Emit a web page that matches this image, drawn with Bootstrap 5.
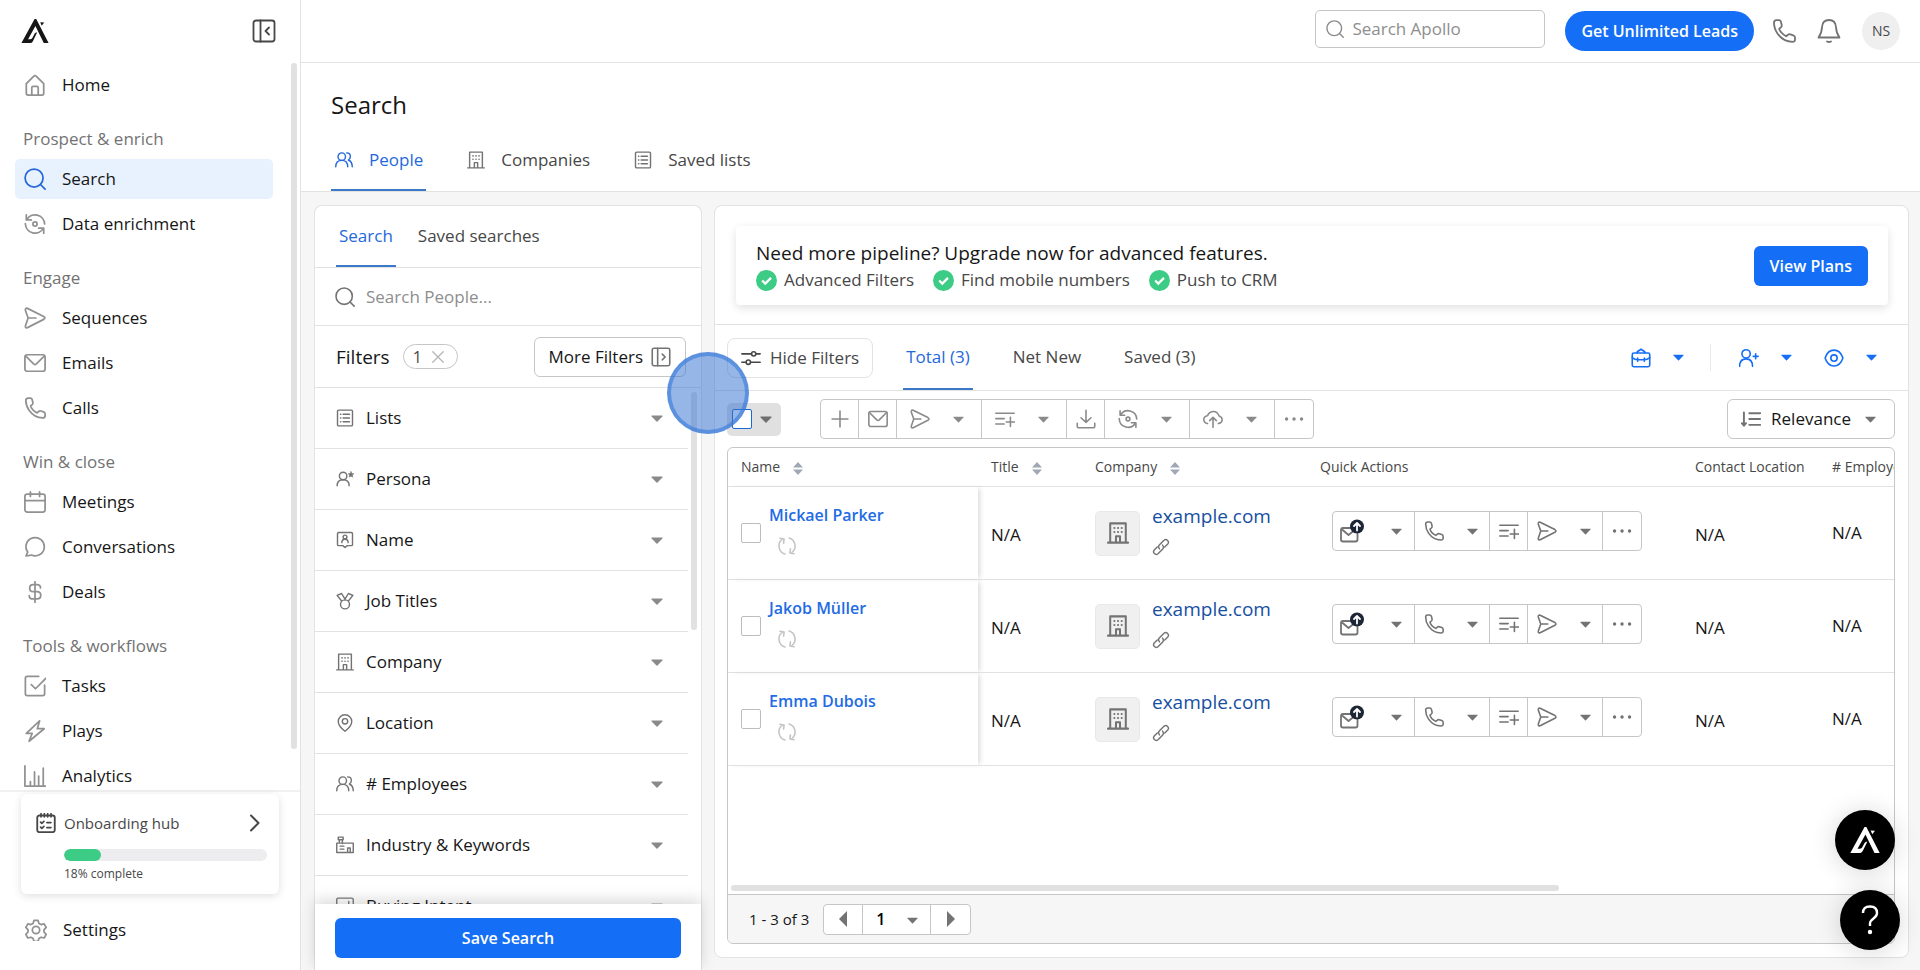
<!DOCTYPE html>
<html lang="en">
<head>
<meta charset="utf-8">
<meta name="viewport" content="width=device-width, initial-scale=1">
<title>Search - Apollo</title>
<link href="https://cdn.jsdelivr.net/npm/bootstrap@5.3.0/dist/css/bootstrap.min.css" rel="stylesheet">
<style>
:root{--blue:#146ef6;--accent:#2468dc;--line:#e2e2e3;--line2:#c6c6c7;--ink:#161616;--ink2:#474747;--mute:#737373;--ico:#919191;--shade:#f6f6f6}
body{font-family:"Open Sans","Noto Sans",sans-serif;font-size:17px;line-height:24px;color:var(--ink);height:100vh;overflow:hidden;background:var(--shade)}
a{text-decoration:none;color:inherit}
.ic{width:20px;height:20px;flex:none;fill:none;stroke:currentColor;stroke-width:1.9;stroke-linecap:round;stroke-linejoin:round}
.ic-lg{width:24px;height:24px;stroke-width:1.8}
.ic-sm{width:18px;height:18px}
.caret{width:12px;height:7px;flex:none;fill:currentColor}
.muted{color:var(--mute)}
.edge{border-color:var(--line)!important}

.side{width:301px;flex:none;background:#fff;border-right:1px solid var(--line)}
.side-head{height:62px;padding:0 24px 0 21px}
.side-nav{padding:4px 27px 0 15px;overflow:hidden;min-height:0}
.side-nav .nav{gap:5px}
.side-link{display:flex;align-items:center;height:40px;padding:0 10px 0 9px;gap:16px;border-radius:5px;font-weight:500}
.side-link .ic{width:22px;height:22px;color:var(--ico)}
.side-link.active{background:#e8f1fe}
.side-link.active .ic{color:var(--accent)}
.side-title{margin:0;padding:22px 8px 8px;font-size:17px;line-height:24px;font-weight:500;color:var(--mute)}
.thumb{position:absolute;background:#e1e1e2;border-radius:3px;width:6px}
.thumb-nav{right:3px;top:2px;height:686px}
.thumb-list{right:4px;top:4px;height:238px}
.side-foot{border-top:2px solid #f1f1f1;background:#fff;padding:2px 21px 20px}
.hub{border-radius:6px;box-shadow:0 2px 8px rgba(0,0,0,.13);padding:17px 12px 11px 15px;color:var(--ink2)}
.hub-label{font-size:15px;font-weight:500}
.hub .progress{height:12px;border-radius:6px;background:#ededef;margin:14px 0 4px 28px}
.hub .progress-bar{background:#3dcc85;border-radius:6px}
.hub-note{font-size:12px;line-height:18px;margin-left:28px;font-weight:500}

.topbar{height:63px;flex:none;border-bottom:1px solid var(--line);background:#fff;padding:0 20px 0 24px}
.top-search{width:230px;height:38px;border:1px solid var(--line2);border-radius:5px;padding:0 10px;gap:8px;color:#8b8b8b;margin:0 20px 4px 0}
.top-icons{gap:21px;margin-left:18px}
.plain-input{border:0;outline:0;background:transparent;padding:0;min-width:0;width:100%;font-weight:500;color:var(--ink)}
.plain-input::placeholder{color:#8e8e8e;opacity:1}
.btn-fill{background:var(--blue);color:#fff;font-size:16px;font-weight:600;border:0;height:40px;padding:0 15px;line-height:24px}
.btn-fill:hover{background:#0f5fd8;color:#fff}
.btn-line{display:flex;align-items:center;height:40px;border:1px solid var(--line2);border-radius:6px;background:#fff;font-weight:500;line-height:24px;color:var(--ink)}
.btn-more{padding:0 14px;gap:8px}
.btn-hide{padding:0 13px;gap:9px;color:var(--ink2);border-radius:8px}
.btn-sort{padding:0 18px 0 13px;gap:10px}
.icon-btn{border:0;background:transparent;padding:0;display:flex;align-items:center;color:inherit}
.avatar{width:38px;height:38px;border-radius:50%;background:#efeff0;font-size:14px;color:var(--ink2)}
.page-head{flex:none;background:#fff;border-bottom:1px solid var(--line);padding:25px 30px 0}
.page-head h1{font-size:24px;line-height:34px;font-weight:500;margin:0 0 16px}
.page-tabs{gap:37px}
.tab-link{display:flex;align-items:center;font-weight:500;color:var(--ink2);border-bottom:2px solid transparent}
.tab-link.active{color:var(--accent);border-bottom-color:#3b78c8}
.page-tabs .tab-link{height:53px;padding:0 3px 8px 4px;gap:16px}
.work{padding:13px 11px 0 13px;gap:12px;min-height:0}
.panel{background:#fff;border:1px solid var(--line);border-radius:8px}

.filters{width:388px;flex:none;border-bottom:0;border-radius:8px 8px 0 0}
.f-tabs{height:62px;flex:none;padding:0 21px;gap:19px}
.f-tabs .tab-link{padding:0 3px}
.f-search{height:58px;flex:none;padding:0 20px;gap:11px}
.f-head{height:62px;flex:none;padding:0 15px 0 21px}
.f-name{font-size:19px;font-weight:500}
.f-count{height:25px;border:1px solid var(--line2);border-radius:13px;padding:0 12px 0 9px;gap:9px;font-size:16px;margin-left:13px;color:var(--ink2)}
.f-count .ic{width:14px;height:14px;color:#b5b5b5;stroke-width:2.200}
.f-row{height:61px;border:0;border-bottom:1px solid var(--line);background:transparent;padding:0 25px 0 21px;gap:12px;font-weight:500;text-align:left;color:var(--ink);width:100%}
.f-row .ic{color:var(--mute)}
.f-row .caret{color:#8a8a8a}
.f-list{overflow:hidden;min-height:0}
.f-rows{padding-right:13px}
.f-save{flex:none;padding:14px 20px 12px;background:#fff;box-shadow:0 -4px 14px rgba(0,0,0,.15)}

.results{margin-bottom:12px;min-width:0}
.banner{flex:none;margin:20px 20px 19px 21px;border-radius:4px;box-shadow:0 3px 10px rgba(0,0,0,.12);padding:14px 20px 13px}
.banner h2{font-size:19px;line-height:26px;font-weight:500;margin:0 0 2px}
.perks{gap:19px;color:var(--ink2);font-weight:400}
.perks li{display:flex;align-items:center;gap:7px}
.tick{width:21px;height:21px;flex:none}
.r-tabs{height:67px;flex:none;padding:0 31px 0 12px;border-top:1px solid var(--line);border-bottom:1px solid var(--line)}
.r-tabs nav{gap:37px;margin-left:30px}
.r-tabs .tab-link{height:65px;padding:0 3px}
.r-acts{color:var(--blue)}
.r-acts .icon-btn{gap:22px}
.r-acts .vr{margin:19px 28px 19px 26px;color:#aaa}
.r-acts .eye-btn{margin-left:32px}
.tools{flex:none;padding:8px 13px 8px 12px}
.check-all{background:#e0e0e1;border-radius:5px;height:33px;padding:0 9px 0 5px;gap:8px;margin-right:39px;color:#6f6f6f}
.box{width:20px;height:20px;margin:0;border:1px solid #bdbdbd;background:#fff;flex:none}
.box[type=checkbox]{border-radius:2px}
.check-all .box{border-color:#1769d8}
.bar-group{display:flex;border:1px solid var(--line2);border-radius:4px;height:40px;width:max-content}
.bar-group>button{border:0;border-right:1px solid var(--line2);background:transparent;padding:0;display:flex;align-items:center;justify-content:center;width:38px;color:inherit}
.bar-group>button:last-child{border-right:0}
.bar-group .caret,.btn-sort .caret,.r-acts .caret{width:11px}
.bar-group>.wide{width:85px;justify-content:space-between;padding:0 17px 0 13px}
.bar-group>.wide2{width:75px;justify-content:space-between;padding:0 11px 0 9px}
.bar-group>.wide3{width:82px;justify-content:space-between;padding:0 12px 0 7px}
.grid-box{border:1px solid var(--line2);border-radius:6px;margin:0 13px 13px 12px;overflow:hidden;min-height:0}
.grid-scroll{overflow:hidden;min-height:0}
.leads{table-layout:fixed;width:1241px;border-collapse:separate;border-spacing:0}
.leads th{height:39px;padding:0 0 0 13px;font-weight:400;font-size:14px;color:var(--ink2);border-bottom:1px solid var(--line);white-space:nowrap}
.leads td{height:93px;padding:0 0 0 13px;border-bottom:1px solid var(--line)}
.leads .plain{padding-top:4px}
.leads td:first-child{box-shadow:4px 0 5px -2px rgba(0,0,0,.15)}
.sort{width:10px;height:13px;fill:#a0a8b5;margin-left:13px}
.lead-text{padding-bottom:7px}
.lead-text .ic{display:block;margin-top:9px}
.who{color:#226be4;font-weight:600;font-size:16px}
.firm{color:#174fa3;font-weight:500;font-size:19px}
.tile{width:45px;height:45px;border-radius:5px;background:#f0f0f1;border:1px solid #e8e8e9;color:var(--mute)}
.tile .ic{width:22px;height:22px;stroke-width:2.200}
.leads .bar-group{margin-left:12px;margin-top:-4px;color:var(--mute)}
.c-faint{color:#c4c4c4}
.hthumb{height:6px;flex:none;width:71%;border-radius:3px;background:#e1e1e2;margin:0 3px 3px}
.grid-foot{background:var(--shade);border-top:1px solid var(--line2);height:49px;flex:none;padding:0 21px;gap:14px;font-size:15px}
.pager{height:31px;background:#fff}
.bar-group.pager>button{width:39px}
.pager-pick{position:relative;width:68px;border-right:1px solid var(--line2)}
.pager-pick select{appearance:none;border:0;background:transparent;width:100%;height:29px;padding:0 13px;font-weight:600;font-size:16px}
.pager-pick .caret{position:absolute;right:12px;top:12px;pointer-events:none}

.fab{position:fixed;width:60px;height:60px;border-radius:50%;border:0;background:#000;color:#fff;display:flex;align-items:center;justify-content:center;box-shadow:0 2px 26px rgba(0,0,0,.16)}
.fab-ask{right:20px;bottom:20px}
.fab-ai{right:25px;bottom:100px}
.pointer{position:fixed;left:667px;top:352px;width:82px;height:82px;border-radius:50%;background:rgba(53,115,209,.52);border:4px solid rgba(53,120,220,.6);pointer-events:none}
</style>
</head>
<body class="d-flex">

<svg width="0" height="0" class="position-absolute" aria-hidden="true">
<symbol id="logo" viewBox="0 0 26 23"><path fill="currentColor" stroke="none" d="M12.600 0h1.600L26 23h-4.600L13.400 6.600 6.400 19.300h2.100c1.200 0 1.600-.4 2.200-1.500l1.800-3.400c.5-1 1.200-1.500 2.500-1.400l-3.900 8c-.8 1.500-1.700 2-3.400 2H0z"/><path fill="currentColor" stroke="none" d="M18 3.200l3.800.2-2.300 3z"/></symbol>
<symbol id="collapse" viewBox="0 0 24 24"><rect x="1.500" y="1.500" width="21" height="21" rx="2.500"/><path d="M8.500 1.500v21M17 8.500 13.500 12l3.500 3.500"/></symbol>
<symbol id="expand" viewBox="0 0 24 24"><rect x="1.500" y="1.500" width="21" height="21" rx="2"/><path d="M8 1.500v21M13.500 8.500 17 12l-3.500 3.500"/></symbol>
<symbol id="home" viewBox="0 0 24 24"><path d="M2.500 10.500 10.500 2.500q1.500-1.300 3 0l8 8V21q0 2-2 2h-15q-2 0-2-2zM8.500 23v-8q0-1.500 1.500-1.500h4q1.500 0 1.500 1.500v8"/></symbol>
<symbol id="search" viewBox="0 0 24 24"><circle cx="11" cy="11" r="9.800"/><path d="m18 18 5 5"/></symbol>
<symbol id="enrich" viewBox="0 0 24 24"><path d="M2.500 2v5.500H8M3 7.200A10.500 10.500 0 0 1 22.500 12M21.500 22v-5.500H16M21 16.800A10.500 10.500 0 0 1 1.500 12M1.500 12v-.5"/><circle cx="12" cy="12" r="2.300"/></symbol>
<symbol id="refresh" viewBox="0 0 24 24"><path d="M9.500 21.500A10 10 0 0 1 6 4.200M3.500 2.800l5 .7-.6 5M14.500 2.500A10 10 0 0 1 18 19.800M20.500 21.200l-5-.7.600-5"/></symbol>
<symbol id="send" viewBox="0 0 24 24"><path d="M1.500 3.500Q1.300.8 3.800 1.500L21.500 10.300q2.500 1.500 0 3.200L3.800 22.500q-2.800.7-2.200-2L4.500 12zM4.500 12h8.500"/></symbol>
<symbol id="mail" viewBox="0 0 24 24"><rect x="1" y="3" width="22" height="18" rx="2.500"/><path d="m2 4.500 8.500 8.500q1.500 1.300 3 0L22 4.500"/></symbol>
<symbol id="phone" viewBox="0 0 24 24"><path d="M2 3.500Q2 1.500 4.500 1.200h2.300q1.700 0 2.100 1.600l.8 3.200q.3 1.500-.8 2.400L7.200 9.800q1.300 4.500 7 7.500l1.800-1.500q1-.9 2.300-.5l3 1q1.700.6 1.700 2.200v2.300q-.3 2-2.500 2Q11 22.500 5.500 14.500 2 9.500 2 3.500z"/></symbol>
<symbol id="calendar" viewBox="0 0 24 24"><rect x="1" y="3.500" width="22" height="19.500" rx="2.500"/><path d="M1 10.500h22M7 1v5M17 1v5"/></symbol>
<symbol id="chat" viewBox="0 0 24 24"><path d="M2.200 21.800 4 17.500A10 10 0 1 1 8 20.800z"/></symbol>
<symbol id="dollar" viewBox="0 0 24 24"><path d="M12 .8v22.400M18 7.500q0-3.500-4-3.500h-4q-3.800 0-3.800 3.800t3.800 3.800h4.300q4 0 4 4t-4 4H10q-4.300 0-4.300-3.600"/></symbol>
<symbol id="task" viewBox="0 0 24 24"><path d="M16 1.500H3.500q-2 0-2 2v17q0 2 2 2h17q2 0 2-2V11M8 10.500l4.500 4.500L24 3.500"/></symbol>
<symbol id="bolt" viewBox="0 0 24 24"><path d="M17 1 2.500 14.500H9L5.500 23.200 22 9.500h-7.500z"/></symbol>
<symbol id="chart" viewBox="0 0 24 24"><path d="M1 1v22h23M7 23v-5M11.500 23V7.500M16 23V12M21 23V3.500"/></symbol>
<symbol id="gear" viewBox="0 0 24 24"><circle cx="12" cy="12" r="4"/><path d="M9.800 1.500h4.400l1 3.300 2.300 1.300 3.400-.8 2.200 3.900-2.400 2.600v2.400l2.400 2.600-2.200 3.900-3.400-.8-2.300 1.300-1 3.300H9.800l-1-3.300-2.300-1.300-3.400.8L.9 16.800l2.400-2.600v-2.400L.9 9.200l2.200-3.900 3.400.8 2.300-1.300z"/></symbol>
<symbol id="checklist" viewBox="0 0 24 24"><rect x="1.500" y="3" width="21" height="20" rx="2.500" stroke-width="2.200"/><path stroke-width="2" d="M6 .8v4M10 .8v4M14 .8v4M18 .8v4M5.500 11l1.500 1.500L9.500 10M5.500 17l1.500 1.500L9.500 16M13 11.500h5M13 17.500h5"/></symbol>
<symbol id="chevron" viewBox="0 0 24 24"><path stroke-width="2.600" d="m8 2 10 10L8 22"/></symbol>
<symbol id="people" viewBox="0 0 24 24"><circle cx="9" cy="7.500" r="5"/><path d="M1 21q0-8.500 8-8.500t8 8.500M15.500 2.500q5 0 5 4.800 0 3-2.800 4.700 5.300 2 5.300 9"/></symbol>
<symbol id="building" viewBox="0 0 24 24"><path d="M3.500 22.500v-21h17v21M1 22.500h22M9.800 22v-6.500h4.400V22"/><path stroke-width="2.200" d="M8 6.500h.1M16 6.500h.1M8 11h.1M16 11h.1M12 6.500h.1M12 11h.1"/></symbol>
<symbol id="list" viewBox="0 0 24 24"><rect x="2" y="1.500" width="20" height="21" rx="1.500"/><path d="M6 7h.5M6 12h.5M6 17h.5M9.500 7H18M9.500 12H18M9.500 17H18"/></symbol>
<symbol id="persona" viewBox="0 0 24 24"><circle cx="9.500" cy="8" r="5"/><path d="M1.500 21q0-8 8-8t8 8"/><path fill="currentColor" stroke-width=".6" d="m20 2 1.200 2.600 2.800.3-2.100 1.900.6 2.800L20 8.200l-2.500 1.400.6-2.800L16 4.900l2.800-.3z"/></symbol>
<symbol id="namecard" viewBox="0 0 24 24"><path d="M3.500 2h17q1.500 0 1.500 1.500v14.500q0 1.500-1.500 1.500H15L12 22l-3-2.500H3.500Q2 19.500 2 18V3.500Q2 2 3.500 2z"/><circle cx="12" cy="8" r="2.500"/><path d="M7.800 15.500q0-4.500 4.200-4.500t4.200 4.500"/></symbol>
<symbol id="medal" viewBox="0 0 24 24"><circle cx="12" cy="16.500" r="6"/><path d="M7.500 12 1.500 4.500 7.500 2 12 9.500 16.500 2l6 2.500L16.500 12M12 9.500v1"/></symbol>
<symbol id="pin" viewBox="0 0 24 24"><path d="M12 23q-9-7-9-13a9 9 0 0 1 18 0q0 6-9 13z"/><circle cx="12" cy="9.800" r="3.600"/></symbol>
<symbol id="factory" viewBox="0 0 24 24"><path d="M4.500 9V5M3 1.500h6.500V5H3zM8.500 5v5M1 9.500h22V22H1zM5.500 13.500h5M5.500 17.500h5M15.500 22v-6h3.500v6"/></symbol>
<symbol id="intent" viewBox="0 0 24 24"><rect x="1" y="1.500" width="22" height="21" rx="2"/><path d="M12 12v7M17 6v13M7 15v4"/></symbol>
<symbol id="bell" viewBox="0 0 24 24"><path d="M12 1q6.500 0 7 7 .2 6 3.500 10.500h-21Q4.800 14 5 8q.5-7 7-7zM10 22.500q2 1 4 0"/></symbol>
<symbol id="sliders" viewBox="0 0 24 24"><path d="M1 7h11.500M18 7h5M1 17h5M11.500 17H23"/><circle cx="15.200" cy="7" r="2.600"/><circle cx="8.800" cy="17" r="2.600"/></symbol>
<symbol id="case" viewBox="0 0 24 24"><rect x="1.500" y="6" width="21" height="16.500" rx="2"/><path d="M7.500 6V4.500L12 1.500l4.500 3V6M1.500 11.500q3 2.500 6.500 2.500h8q3.500 0 6.500-2.500M8 12v4M16 12v4"/></symbol>
<symbol id="adduser" viewBox="0 0 24 24"><circle cx="8.500" cy="7" r="5"/><path d="M.8 22q0-9 7.700-9t7.700 9M20 7v6M17 10h6"/></symbol>
<symbol id="eye" viewBox="0 0 24 24"><path d="M1.300 12Q4.500 2.500 12 2.500T22.700 12Q19.500 21.500 12 21.500T1.300 12z"/><circle cx="12" cy="12" r="3.800"/></symbol>
<symbol id="plus" viewBox="0 0 24 24"><path d="M12 2.500v19M2.500 12h19"/></symbol>
<symbol id="listadd" viewBox="0 0 24 24"><path d="M1 5h22M1 11.500h10M1 18h10M18.500 10v11M13.500 15.500h10"/></symbol>
<symbol id="download" viewBox="0 0 24 24"><path d="M12 1.500v14M6 10.500l6 5.500 6-5.500M1.500 17v4q0 1.500 1.500 1.500h18q1.500 0 1.500-1.500v-4"/></symbol>
<symbol id="cloud" viewBox="0 0 24 24"><path d="M5.500 17.500Q1 16.500 1 12.500T5.500 8Q7.500 3 12.500 3t6.800 5.500q3.700 1 3.700 4.500t-4.500 4.500M12 22V10.500M8 14l4-4 4 4"/></symbol>
<symbol id="dots" viewBox="0 0 24 24"><path stroke-width="4" d="M3 12h.1M12 12h.1M21 12h.1"/></symbol>
<symbol id="sortlist" viewBox="0 0 24 24"><path stroke-width="2.300" d="M3.500 4v15M1 17l2.500 3L6 17M10 5h13M10 12h13M10 19h13"/></symbol>
<symbol id="link" viewBox="0 0 24 24"><path d="M10 14.500q-2.500-3 0-5.500l6-6q2.500-2 4.800.200t.2 4.800l-4 4M14 9.500q2.500 3 0 5.500l-6 6q-2.500 2-4.800-.200T3 16l4-4"/></symbol>
<symbol id="mailup" viewBox="0 0 24 24"><path d="M13 9H3q-2 0-2 2v9.500q0 2 2 2h12.500q2 0 2-2V15M1.500 10l7 6 5-4"/><circle cx="17" cy="7.500" r="7" fill="#1d2635" stroke="none"/><path stroke="#fff" stroke-width="1.800" d="M17 11.500V4.500M14 7l3-3 3 3"/></symbol>
<symbol id="x" viewBox="0 0 24 24"><path d="m3 3 18 18M21 3 3 21"/></symbol>
<symbol id="down" viewBox="0 0 12 7"><path stroke="none" d="M.8.500h10.400q.7.300.2.900L6.500 6.600q-.5.500-1 0L.6 1.400Q.100.800.800.500z"/></symbol>
<symbol id="sort" viewBox="0 0 10 13"><path d="M5 0l5 5.500H0zM5 13l5-5.500H0z"/></symbol>
<symbol id="tick" viewBox="0 0 22 22"><circle cx="11" cy="11" r="11" fill="#3dcc85"/><path fill="none" stroke="#fff" stroke-width="2.400" d="m6.500 11 3.200 3.200 6-6"/></symbol>
</svg>

<aside class="side d-flex flex-column vh-100">
  <div class="side-head d-flex align-items-center justify-content-between">
    <a href="#" aria-label="Apollo"><svg width="28" height="24"><use href="#logo"/></svg></a>
    <button class="icon-btn" aria-label="Collapse sidebar" style="color:#474747"><svg class="ic ic-lg"><use href="#collapse"/></svg></button>
  </div>
  <div class="position-relative flex-fill d-flex flex-column" style="min-height:0">
    <nav class="side-nav flex-fill">
      <div class="nav flex-column flex-nowrap"><a class="side-link" href="#"><svg class="ic"><use href="#home"/></svg>Home</a></div>
      <h6 class="side-title">Prospect &amp; enrich</h6>
      <div class="nav flex-column flex-nowrap">
        <a class="side-link active" href="#"><svg class="ic"><use href="#search"/></svg>Search</a>
        <a class="side-link" href="#"><svg class="ic"><use href="#enrich"/></svg>Data enrichment</a>
      </div>
      <h6 class="side-title">Engage</h6>
      <div class="nav flex-column flex-nowrap">
        <a class="side-link" href="#"><svg class="ic"><use href="#send"/></svg>Sequences</a>
        <a class="side-link" href="#"><svg class="ic"><use href="#mail"/></svg>Emails</a>
        <a class="side-link" href="#"><svg class="ic"><use href="#phone"/></svg>Calls</a>
      </div>
      <h6 class="side-title">Win &amp; close</h6>
      <div class="nav flex-column flex-nowrap">
        <a class="side-link" href="#"><svg class="ic"><use href="#calendar"/></svg>Meetings</a>
        <a class="side-link" href="#"><svg class="ic"><use href="#chat"/></svg>Conversations</a>
        <a class="side-link" href="#"><svg class="ic"><use href="#dollar"/></svg>Deals</a>
      </div>
      <h6 class="side-title">Tools &amp; workflows</h6>
      <div class="nav flex-column flex-nowrap">
        <a class="side-link" href="#"><svg class="ic"><use href="#task"/></svg>Tasks</a>
        <a class="side-link" href="#"><svg class="ic"><use href="#bolt"/></svg>Plays</a>
        <a class="side-link" href="#"><svg class="ic"><use href="#chart"/></svg>Analytics</a>
      </div>
    </nav>
    <div class="thumb thumb-nav"></div>
  </div>
  <div class="side-foot">
    <div class="hub mb-3">
      <a href="#" class="d-flex align-items-center">
        <svg class="ic me-2"><use href="#checklist"/></svg><span class="hub-label flex-fill">Onboarding hub</span>
        <svg class="ic ic-sm me-1"><use href="#chevron"/></svg>
      </a>
      <div class="progress" role="progressbar" aria-label="Onboarding" aria-valuenow="18" aria-valuemin="0" aria-valuemax="100"><div class="progress-bar" style="width:18%"></div></div>
      <div class="hub-note">18% complete</div>
    </div>
    <a class="side-link px-1" href="#"><svg class="ic"><use href="#gear"/></svg>Settings</a>
  </div>
</aside>

<main class="flex-fill d-flex flex-column vh-100" style="min-width:0">
  <header class="topbar d-flex align-items-center justify-content-end">
    <label class="top-search d-flex align-items-center"><svg class="ic ic-sm"><use href="#search"/></svg><input class="plain-input" type="search" placeholder="Search Apollo" aria-label="Search Apollo"></label>
    <button class="btn btn-fill rounded-pill px-3">Get Unlimited Leads</button>
    <div class="top-icons d-flex align-items-center muted">
      <button class="icon-btn" aria-label="Calls"><svg class="ic ic-lg"><use href="#phone"/></svg></button>
      <button class="icon-btn" aria-label="Notifications"><svg class="ic ic-lg"><use href="#bell"/></svg></button>
      <button class="icon-btn avatar justify-content-center">NS</button>
    </div>
  </header>

  <div class="page-head">
    <h1>Search</h1>
    <nav class="page-tabs d-flex">
      <a class="tab-link active" href="#"><svg class="ic ic-sm"><use href="#people"/></svg>People</a>
      <a class="tab-link" href="#"><svg class="ic ic-sm muted"><use href="#building"/></svg>Companies</a>
      <a class="tab-link" href="#"><svg class="ic ic-sm muted"><use href="#list"/></svg>Saved lists</a>
    </nav>
  </div>

  <div class="work d-flex flex-fill">
    <section class="panel filters d-flex flex-column">
      <nav class="f-tabs d-flex border-bottom edge"><a class="tab-link active" href="#">Search</a><a class="tab-link" href="#">Saved searches</a></nav>
      <label class="f-search d-flex align-items-center border-bottom edge muted"><svg class="ic"><use href="#search"/></svg><input class="plain-input" type="search" placeholder="Search People..." aria-label="Search people"></label>
      <div class="f-head d-flex align-items-center border-bottom edge">
        <span class="f-name">Filters</span>
        <button class="f-count bg-white d-flex align-items-center">1 <svg class="ic"><use href="#x"/></svg></button>
        <button class="btn-line btn-more ms-auto">More Filters <svg class="ic muted"><use href="#expand"/></svg></button>
      </div>
      <div class="position-relative flex-fill f-list">
        <div class="f-rows">
          <button class="f-row d-flex align-items-center"><svg class="ic ic-sm"><use href="#list"/></svg><span class="flex-fill">Lists</span><svg class="caret"><use href="#down"/></svg></button>
          <button class="f-row d-flex align-items-center"><svg class="ic ic-sm"><use href="#persona"/></svg><span class="flex-fill">Persona</span><svg class="caret"><use href="#down"/></svg></button>
          <button class="f-row d-flex align-items-center"><svg class="ic ic-sm"><use href="#namecard"/></svg><span class="flex-fill">Name</span><svg class="caret"><use href="#down"/></svg></button>
          <button class="f-row d-flex align-items-center"><svg class="ic ic-sm"><use href="#medal"/></svg><span class="flex-fill">Job Titles</span><svg class="caret"><use href="#down"/></svg></button>
          <button class="f-row d-flex align-items-center"><svg class="ic ic-sm"><use href="#building"/></svg><span class="flex-fill">Company</span><svg class="caret"><use href="#down"/></svg></button>
          <button class="f-row d-flex align-items-center"><svg class="ic ic-sm"><use href="#pin"/></svg><span class="flex-fill">Location</span><svg class="caret"><use href="#down"/></svg></button>
          <button class="f-row d-flex align-items-center"><svg class="ic ic-sm"><use href="#people"/></svg><span class="flex-fill"># Employees</span><svg class="caret"><use href="#down"/></svg></button>
          <button class="f-row d-flex align-items-center"><svg class="ic ic-sm"><use href="#factory"/></svg><span class="flex-fill">Industry &amp; Keywords</span><svg class="caret"><use href="#down"/></svg></button>
          <button class="f-row d-flex align-items-center"><svg class="ic ic-sm"><use href="#intent"/></svg><span class="flex-fill">Buying Intent</span><svg class="caret"><use href="#down"/></svg></button>
        </div>
        <div class="thumb thumb-list"></div>
      </div>
      <div class="f-save"><button class="btn btn-fill w-100">Save Search</button></div>
    </section>

    <section class="panel results flex-fill d-flex flex-column">
      <div class="banner d-flex align-items-center justify-content-between">
        <div>
          <h2>Need more pipeline? Upgrade now for advanced features.</h2>
          <ul class="perks list-unstyled d-flex mb-0">
            <li><svg class="tick"><use href="#tick"/></svg>Advanced Filters</li>
            <li><svg class="tick"><use href="#tick"/></svg>Find mobile numbers</li>
            <li><svg class="tick"><use href="#tick"/></svg>Push to CRM</li>
          </ul>
        </div>
        <button class="btn btn-fill px-3">View Plans</button>
      </div>

      <div class="r-tabs d-flex align-items-center">
        <button class="btn-line btn-hide edge"><svg class="ic"><use href="#sliders"/></svg>Hide Filters</button>
        <nav class="d-flex"><a class="tab-link active" href="#">Total (3)</a><a class="tab-link" href="#">Net New</a><a class="tab-link" href="#">Saved (3)</a></nav>
        <div class="r-acts ms-auto d-flex align-self-stretch">
          <button class="icon-btn" aria-label="Research"><svg class="ic"><use href="#case"/></svg><svg class="caret"><use href="#down"/></svg></button>
          <div class="vr"></div>
          <button class="icon-btn" aria-label="Add contact"><svg class="ic"><use href="#adduser"/></svg><svg class="caret"><use href="#down"/></svg></button>
          <button class="icon-btn eye-btn" aria-label="View options"><svg class="ic"><use href="#eye"/></svg><svg class="caret"><use href="#down"/></svg></button>
        </div>
      </div>

      <div class="tools d-flex align-items-center">
        <label class="check-all d-flex align-items-center"><input type="checkbox" class="form-check-input box" aria-label="Select all"><svg class="caret"><use href="#down"/></svg></label>
        <div class="bar-group" style="color:#8a8a8a">
          <button aria-label="Add"><svg class="ic"><use href="#plus"/></svg></button>
          <button aria-label="Email"><svg class="ic"><use href="#mail"/></svg></button>
          <button class="wide" aria-label="Sequence"><svg class="ic"><use href="#send"/></svg><svg class="caret"><use href="#down"/></svg></button>
          <button class="wide" aria-label="Add to list"><svg class="ic"><use href="#listadd"/></svg><svg class="caret"><use href="#down"/></svg></button>
          <button aria-label="Export"><svg class="ic"><use href="#download"/></svg></button>
          <button class="wide" aria-label="Enrich"><svg class="ic"><use href="#enrich"/></svg><svg class="caret"><use href="#down"/></svg></button>
          <button class="wide" aria-label="Push"><svg class="ic"><use href="#cloud"/></svg><svg class="caret"><use href="#down"/></svg></button>
          <button aria-label="More"><svg class="ic"><use href="#dots"/></svg></button>
        </div>
        <button class="btn-line btn-sort ms-auto"><svg class="ic muted"><use href="#sortlist"/></svg>Relevance<svg class="caret muted ms-1"><use href="#down"/></svg></button>
      </div>

      <div class="grid-box flex-fill d-flex flex-column">
        <div class="grid-scroll flex-fill">
          <table class="leads">
            <colgroup><col style="width:250px"><col style="width:104px"><col style="width:225px"><col style="width:375px"><col style="width:137px"><col></colgroup>
            <thead><tr>
              <th scope="col">Name<svg class="sort"><use href="#sort"/></svg></th><th scope="col">Title<svg class="sort"><use href="#sort"/></svg></th><th scope="col">Company<svg class="sort"><use href="#sort"/></svg></th><th scope="col">Quick Actions</th><th scope="col">Contact Location</th><th scope="col"># Employees</th>
            </tr></thead>
            <tbody>
              <tr>
                <td><div class="d-flex align-items-center gap-2"><input type="checkbox" class="form-check-input box" aria-label="Select Mickael Parker"><div class="lead-text"><a class="who" href="#">Mickael Parker</a><div class="ms-2 c-faint"><svg class="ic"><use href="#refresh"/></svg></div></div></div></td>
                <td class="plain">N/A</td>
                <td><div class="d-flex align-items-center gap-2"><span class="tile d-flex align-items-center justify-content-center me-1"><svg class="ic"><use href="#building"/></svg></span><div class="lead-text"><a class="firm" href="#">example.com</a><svg class="ic ic-sm muted"><use href="#link"/></svg></div></div></td>
                <td><div class="bar-group"><button class="wide3" aria-label="Email"><svg class="ic ic-lg"><use href="#mailup"/></svg><svg class="caret"><use href="#down"/></svg></button><button class="wide2" aria-label="Call"><svg class="ic"><use href="#phone"/></svg><svg class="caret"><use href="#down"/></svg></button><button aria-label="Add to list"><svg class="ic"><use href="#listadd"/></svg></button><button class="wide2" aria-label="Sequence"><svg class="ic"><use href="#send"/></svg><svg class="caret"><use href="#down"/></svg></button><button aria-label="More"><svg class="ic"><use href="#dots"/></svg></button></div></td>
                <td class="plain">N/A</td><td>N/A</td>
              </tr>
              <tr>
                <td><div class="d-flex align-items-center gap-2"><input type="checkbox" class="form-check-input box" aria-label="Select Jakob Müller"><div class="lead-text"><a class="who" href="#">Jakob Müller</a><div class="ms-2 c-faint"><svg class="ic"><use href="#refresh"/></svg></div></div></div></td>
                <td class="plain">N/A</td>
                <td><div class="d-flex align-items-center gap-2"><span class="tile d-flex align-items-center justify-content-center me-1"><svg class="ic"><use href="#building"/></svg></span><div class="lead-text"><a class="firm" href="#">example.com</a><svg class="ic ic-sm muted"><use href="#link"/></svg></div></div></td>
                <td><div class="bar-group"><button class="wide3" aria-label="Email"><svg class="ic ic-lg"><use href="#mailup"/></svg><svg class="caret"><use href="#down"/></svg></button><button class="wide2" aria-label="Call"><svg class="ic"><use href="#phone"/></svg><svg class="caret"><use href="#down"/></svg></button><button aria-label="Add to list"><svg class="ic"><use href="#listadd"/></svg></button><button class="wide2" aria-label="Sequence"><svg class="ic"><use href="#send"/></svg><svg class="caret"><use href="#down"/></svg></button><button aria-label="More"><svg class="ic"><use href="#dots"/></svg></button></div></td>
                <td class="plain">N/A</td><td>N/A</td>
              </tr>
              <tr>
                <td><div class="d-flex align-items-center gap-2"><input type="checkbox" class="form-check-input box" aria-label="Select Emma Dubois"><div class="lead-text"><a class="who" href="#">Emma Dubois</a><div class="ms-2 c-faint"><svg class="ic"><use href="#refresh"/></svg></div></div></div></td>
                <td class="plain">N/A</td>
                <td><div class="d-flex align-items-center gap-2"><span class="tile d-flex align-items-center justify-content-center me-1"><svg class="ic"><use href="#building"/></svg></span><div class="lead-text"><a class="firm" href="#">example.com</a><svg class="ic ic-sm muted"><use href="#link"/></svg></div></div></td>
                <td><div class="bar-group"><button class="wide3" aria-label="Email"><svg class="ic ic-lg"><use href="#mailup"/></svg><svg class="caret"><use href="#down"/></svg></button><button class="wide2" aria-label="Call"><svg class="ic"><use href="#phone"/></svg><svg class="caret"><use href="#down"/></svg></button><button aria-label="Add to list"><svg class="ic"><use href="#listadd"/></svg></button><button class="wide2" aria-label="Sequence"><svg class="ic"><use href="#send"/></svg><svg class="caret"><use href="#down"/></svg></button><button aria-label="More"><svg class="ic"><use href="#dots"/></svg></button></div></td>
                <td class="plain">N/A</td><td>N/A</td>
              </tr>
            </tbody>
          </table>
        </div>
        <div class="hthumb"></div>
        <div class="grid-foot d-flex align-items-center">
          <span>1 - 3 of 3</span>
          <div class="bar-group pager muted">
            <button aria-label="Previous page"><svg width="8" height="16" fill="currentColor"><path d="M8 0v16L0 8z"/></svg></button>
            <div class="pager-pick"><select aria-label="Page"><option>1</option></select><svg class="caret"><use href="#down"/></svg></div>
            <button aria-label="Next page"><svg width="8" height="16" fill="currentColor"><path d="M0 0v16l8-8z"/></svg></button>
          </div>
        </div>
      </div>
    </section>
  </div>
</main>

<button class="fab fab-ai" aria-label="Apollo assistant"><svg width="30" height="26"><use href="#logo"/></svg></button>
<button class="fab fab-ask" aria-label="Help"><svg width="18" height="30" viewBox="0 0 18 30" fill="none" stroke="#fff" stroke-width="2.400"><path d="M2 8q0-6.500 7-6.500T16 8q0 3-3.500 5.500T9 18.500V21"/><circle cx="9" cy="27" r="1" fill="#fff"/></svg></button>
<div class="pointer"></div>

<script src="https://cdn.jsdelivr.net/npm/bootstrap@5.3.0/dist/js/bootstrap.bundle.min.js"></script>
</body>
</html>
